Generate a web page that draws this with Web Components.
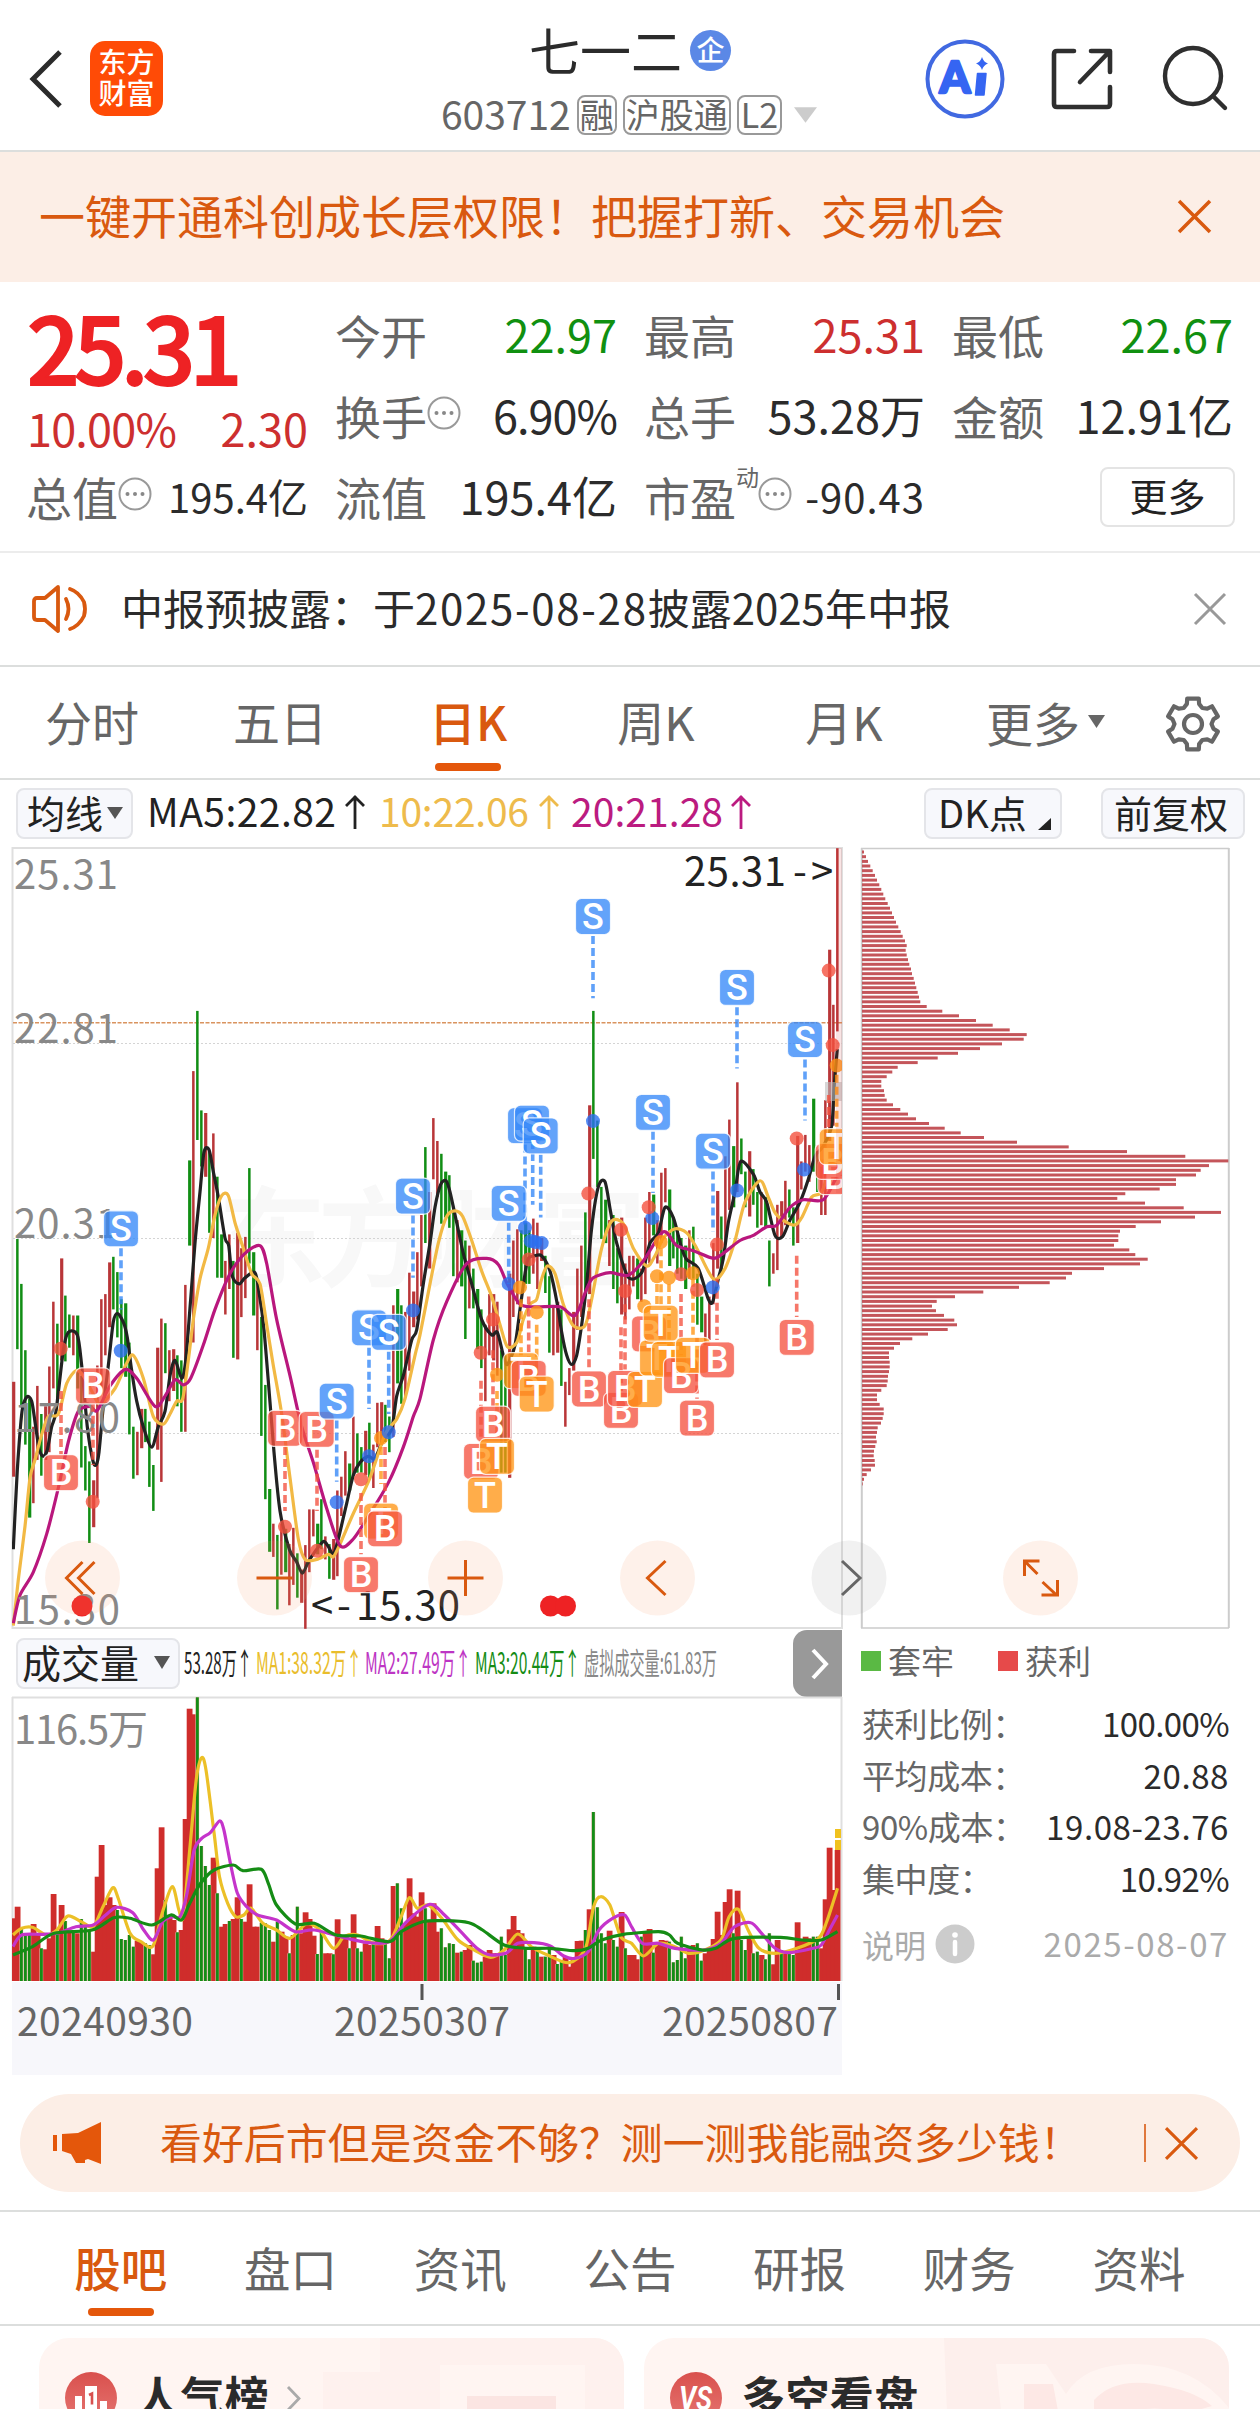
<!DOCTYPE html>
<html lang="zh-CN">
<head>
<meta charset="utf-8">
<title>七一二 603712</title>
<style>
  html, body { margin: 0; padding: 0; }
  body {
    width: 1260px;
    height: 2409px;
    overflow: hidden;
    background: #fff;
    color: #2b2b2b;
    font-family: "Noto Sans CJK SC", "Noto Sans", sans-serif;
    --orange: #d9590f;
    --tint: #fceee6;
    --up: #cd2f2f;
    --down: #109010;
    --grey: #666;
    --line: #dcdedd;
  }
</style>
</head>
<body>
<stock-app></stock-app>

<script>
// Small base class: every element sets its markup once, in its own shadow root.
class BaseEl extends HTMLElement {
  constructor() {
    super();
    this.attachShadow({ mode: 'open' });
  }
  connectedCallback() {
    this.shadowRoot.innerHTML = `<style>
      :host { display: block; box-sizing: border-box; }
      * { box-sizing: border-box; }
      svg { display: block; flex: none; overflow: visible; }
      ${this.css()}
    </style>${this.html()}`;
  }
  css() { return ''; }
  html() { return ''; }
}

const cross = (size, color, w = 3) => `
  <svg width="${size}" height="${size}" viewBox="0 0 32 32">
    <path d="M1 1 31 31M31 1 1 31" fill="none" stroke="${color}" stroke-width="${w}"/>
  </svg>`;

// Smooth path through a list of points.
function curve(pts) {
  let d = `M${pts[0][0].toFixed(1)} ${pts[0][1].toFixed(1)}`;
  for (let i = 0; i < pts.length - 1; i++) {
    const p0 = pts[i - 1] || pts[i], p1 = pts[i], p2 = pts[i + 1], p3 = pts[i + 2] || p2;
    const c = [
      p1[0] + (p2[0] - p0[0]) / 7, p1[1] + (p2[1] - p0[1]) / 7,
      p2[0] - (p3[0] - p1[0]) / 7, p2[1] - (p3[1] - p1[1]) / 7,
      p2[0], p2[1]
    ];
    d += 'C' + c.map(n => n.toFixed(1)).join(' ');
  }
  return d;
}

// "x,y x,y | x,y" : the part after the bar belongs to the second half of the plot.
function parse(text, fx, fy) {
  return text.split('|').flatMap((part, k) =>
    part.trim().split(/\s+/).map(p => {
      const [x, y] = p.split(',').map(Number);
      return [(x + k * 1260) / fx, y / fy];
    }));
}

customElements.define('app-header', class extends BaseEl {
  css() {
    return `
      :host { height: 152px; border-bottom: 2px solid var(--line); }
      header { display: grid; grid-template-columns: 380px 1fr 380px; height: 150px; }
      .left { display: flex; align-items: flex-start; padding: 41px 0 0 29px; gap: 27px; }
      .left > svg { margin-top: 9px; }
      .logo {
        width: 73px; height: 75px; border-radius: 15px; background: #ff4b06; color: #fff;
        font-size: 28px; line-height: 31px; font-weight: 500; text-align: center; padding-top: 5px;
      }
      .mid { display: flex; flex-direction: column; align-items: center; }
      .name { display: flex; align-items: center; height: 60px; margin-top: 19px; font-size: 51px; line-height: 60px; }
      .qi { width: 41px; height: 41px; border-radius: 50%; background: #5b88e6; color: #fff; font-size: 28px; line-height: 39px; text-align: center; font-weight: 500; margin: 3px 0 0 8px; }
      .code { display: flex; align-items: center; height: 40px; margin-top: 16px; font-size: 39px; color: #666; line-height: 40px; margin-right: 2px; }
      .code b { font-weight: 400; margin-top: -5px; }
      .tag { border: 2px solid #999; border-radius: 8px; height: 40px; line-height: 33px; font-size: 34px; padding: 0 1px; margin-left: 6px; }
      .right { display: flex; align-items: flex-start; padding: 39px 0 0 45px; }
    `;
  }
  html() {
    return `
    <header>
      <div class="left">
        <svg width="34" height="58" viewBox="0 0 34 58"><path d="M31 2 4 29 31 56" fill="none" stroke="#2b2b2b" stroke-width="5"/></svg>
        <div class="logo">东方<br>财富</div>
      </div>
      <div class="mid">
        <div class="name">七一二<div class="qi">企</div></div>
        <div class="code"><b>603712</b><span class="tag">融</span><span class="tag">沪股通</span><span class="tag" style="padding:0 2px">L2</span>
          <svg width="23" height="16" viewBox="0 0 24 16" style="margin-left:12px"><path d="M0 0h24L12 16z" fill="#ccc"/></svg>
        </div>
      </div>
      <div class="right">
        <svg width="80" height="80" viewBox="0 0 80 80">
          <circle cx="40" cy="40" r="37.500" fill="#fff" stroke="#4169e1" stroke-width="4"/>
          <text x="14.500" y="53.500" font-family="Lato, sans-serif" font-weight="900" font-size="44" fill="#3565f2" stroke="#3565f2" stroke-width="2.400" stroke-linejoin="round" textLength="30">A</text>
          <path d="M52.500 34.500h8.500l-2 21.500h-8.500z" fill="#3565f2" stroke="#3565f2" stroke-width="1.500" stroke-linejoin="round"/>
          <path d="M57 18q1.500 5 6 6.500-4.500 1.500-6 6.500-1.500-5-6-6.500 4.500-1.500 6-6.500z" fill="#3565f2"/>
        </svg>
        <svg width="64" height="64" viewBox="0 0 64 64" style="margin:8px 0 0 45px" fill="none" stroke="#2f2f2f" stroke-width="4.600" stroke-linecap="round" stroke-linejoin="round">
          <path d="M24 4H7q-3 0-3 3v50q0 3 3 3h50q3 0 3-3V40M41 4h19v21M59 5 30 35"/>
        </svg>
        <svg width="66" height="66" viewBox="0 0 66 66" style="margin:7px 0 0 49px" fill="none" stroke="#2f2f2f" stroke-width="4.400" stroke-linecap="round">
          <circle cx="30" cy="30" r="28"/><path d="M50 50 62 62"/>
        </svg>
      </div>
    </header>`;
  }
});

customElements.define('promo-bar', class extends BaseEl {
  css() {
    return `
      :host { height: 130px; background: var(--tint); color: var(--orange); }
      div { display: flex; align-items: center; justify-content: space-between; height: 128px; padding: 0 49px 0 39px; font-size: 46px; }
      span { margin-top: -4px; }
    `;
  }
  html() { return `<div><span><slot></slot></span>${cross(33, '#d9590f', 3.4)}</div>`; }
});

customElements.define('more-dots', class extends BaseEl {
  css() { return ':host { flex: none; }'; }
  html() {
    return `<svg width="34" height="34" viewBox="0 0 34 34"><circle cx="17" cy="17" r="15.500" fill="none" stroke="#999" stroke-width="2"/>
      <g fill="#888"><circle cx="9.500" cy="17" r="2"/><circle cx="17" cy="17" r="2"/><circle cx="24.500" cy="17" r="2"/></g></svg>`;
  }
});

customElements.define('quote-cell', class extends BaseEl {
  css() {
    return `
      :host { display: flex; align-items: center; font-size: 45px; line-height: 60px; height: 60px; white-space: nowrap; margin-top: -3px; }
      .k { color: var(--grey); font-size: 46px; margin-left: -1px; }
      .v { margin-left: auto; }
      .up { color: var(--up); } .down { color: var(--down); }
      .small { font-size: 40px; }
      .pct { letter-spacing: -1px; }
      .neg { letter-spacing: 1px; }
      sup { font-size: 23px; line-height: 23px; color: var(--grey); align-self: flex-start; margin-top: -1px; margin-right: -1px; }
      more-dots { margin-top: -5px; }
    `;
  }
  html() {
    const a = n => this.getAttribute(n) || '';
    return `<span class="k">${a('k')}</span>${a('sup') ? `<sup>${a('sup')}</sup>` : ''}
      ${this.hasAttribute('dots') ? '<more-dots></more-dots>' : ''}<span class="v ${a('tone')}">${a('v')}</span>`;
  }
});

customElements.define('quote-panel', class extends BaseEl {
  css() {
    return `
      :host { height: 271px; border-bottom: 2px solid #ececec; padding: 25px 27px 0 27px; }
      .grid { display: grid; grid-template-columns: 281px 281px 280px 280px; column-gap: 28px; grid-template-rows: 81px 81px 60px; }
      .price { grid-row: 1 / 3; }
      .big { font-size: 92px; font-weight: 500; -webkit-text-stroke: 2px #ee2224; line-height: 92px; color: #ee2224; letter-spacing: -5.500px; margin-top: -8px; height: 97px; }
      .chg { display: flex; justify-content: space-between; color: var(--up); font-size: 45px; line-height: 60px; margin-top: 2px; }
      .chg span:first-child { letter-spacing: -.8px; }
      button {
        justify-self: end; align-self: center; width: 135px; height: 60px; border: 2px solid #e4e4e4; border-radius: 8px; background: #fff;
        font: 38px/50px "Noto Sans CJK SC", sans-serif; color: #222; padding: 0 0 4px; margin-top: -4px; margin-right: -2px;
      }
    `;
  }
  html() {
    return `
    <div class="grid">
      <div class="price"><div class="big">25.31</div><div class="chg"><span>10.00%</span><span>2.30</span></div></div>
      <quote-cell k="今开" v="22.97" tone="down"></quote-cell>
      <quote-cell k="最高" v="25.31" tone="up"></quote-cell>
      <quote-cell k="最低" v="22.67" tone="down"></quote-cell>
      <quote-cell k="换手" v="6.90%" tone="pct" dots></quote-cell>
      <quote-cell k="总手" v="53.28万"></quote-cell>
      <quote-cell k="金额" v="12.91亿"></quote-cell>
      <quote-cell k="总值" v="195.4亿" tone="small" dots></quote-cell>
      <quote-cell k="流值" v="195.4亿"></quote-cell>
      <quote-cell k="市盈" sup="动" v="-90.43" tone="small neg" dots></quote-cell>
      <button>更多</button>
    </div>`;
  }
});

customElements.define('notice-bar', class extends BaseEl {
  css() {
    return `
      :host { height: 114px; border-bottom: 2px solid var(--line); }
      div { display: flex; align-items: center; height: 112px; padding: 0 34px 0 31px; font-size: 42px; }
      span { margin: -6px 0 0 34px; flex: 1; }
    `;
  }
  html() {
    return `<div>
      <svg width="56" height="50" viewBox="0 0 56 50" fill="none" stroke="#d9590f" stroke-width="3.800" stroke-linejoin="round">
        <path d="M27 3 14 14H6q-3 0-3 3v16q0 3 3 3h8l13 11z"/><path d="M35 15q5 10 0 20M39 5q9 3 14 13 2 7 0 14-5 10-14 13" stroke-linecap="round"/>
      </svg>
      <span><slot></slot></span>${cross(32, '#999')}</div>`;
  }
});

customElements.define('period-tabs', class extends BaseEl {
  css() {
    return `
      :host { height: 113px; border-bottom: 2px solid var(--line); }
      nav { display: grid; grid-template-columns: repeat(5, 188px) 211px 1fr; height: 110px; color: var(--grey); font-size: 47px; line-height: 108px; text-align: center; margin-left: -2px; }
      .on { color: var(--orange); font-weight: 500; display: flex; flex-direction: column; align-items: center; height: 110px; }
      .on::after { content: ""; width: 66px; height: 8px; border-radius: 4px; background: #e4570b; margin-top: -12px; flex: none; }
      .more { display: flex; align-items: center; justify-content: center; gap: 8px; padding-left: 4px; }
      .gear { display: flex; align-items: center; padding: 3px 0 0 16px; }
    `;
  }
  html() {
    const teeth = [];
    for (let i = 0; i < 6; i++) {
      // outline of a six-toothed gear, tooth by tooth
      const pt = (deg, r) => {
        const t = (deg + i * 60 - 90) * Math.PI / 180;
        return `${(28 + r * Math.cos(t)).toFixed(1)} ${(28 + r * Math.sin(t)).toFixed(1)}`;
      };
      teeth.push(pt(-13, 26), pt(13, 26), pt(17, 21), pt(30, 18.5), pt(43, 21));
    }
    return `<nav><span>分时</span><span>五日</span><span class="on">日K</span><span>周K</span><span>月K</span>
      <span class="more">更多<svg width="17" height="13" viewBox="0 0 17 13" style="margin-top:-2px"><path d="M0 0h17L8.500 13z" fill="#666"/></svg></span>
      <span class="gear"><svg width="56" height="56" viewBox="0 0 56 56" fill="none" stroke="#666" stroke-width="4.200" stroke-linejoin="round">
        <path d="M${teeth.join('L')}z"/><circle cx="28" cy="28" r="9"/></svg></span></nav>`;
  }
});

customElements.define('ma-bar', class extends BaseEl {
  css() {
    return `
      :host { height: 60px; padding: 7px 15px 0 16px; }
      div { display: flex; align-items: center; height: 52px; line-height: 48px; white-space: nowrap; }
      .box { border: 2px solid #e4e5e9; border-radius: 8px; background: #f7f8fc; height: 51px; display: flex; align-items: center; color: #222; font-size: 38px; line-height: 44px; padding-bottom: 3px; }
    `;
  }
  html() {
    const ma = (t, c, x, w) => `<text x="${x}" y="40" fill="${c}" textLength="${w}">${t}</text>`;
    const up = (x, c) => `<path d="M${x} 42V9M${x - 9} 19l9-9 9 9" fill="none" stroke="${c}" stroke-width="2.800"/>`;
    return `<div>
      <span class="box" style="width:117px;padding-left:9px">均线<svg width="16" height="12" viewBox="0 0 16 12" style="margin:3px 0 0 4px"><path d="M0 0h16L8 12z" fill="#555"/></svg></span>
      <svg width="640" height="52" viewBox="0 0 640 52" font-size="39">
        ${ma('MA5:22.82', '#222', 14, 189)}${up(222, '#222')}
        ${ma('10:22.06', '#eebb4c', 246, 150)}${up(416, '#eebb4c')}
        ${ma('20:21.28', '#bb1b80', 438, 152)}${up(608, '#bb1b80')}
      </svg>
      <span class="box" style="width:138px;margin-left:151px;padding-left:12px">DK点<svg width="13" height="12" viewBox="0 0 13 12" style="margin:24px 0 0 11px"><path d="M13 0v12H0z" fill="#222"/></svg></span>
      <span class="box" style="width:144px;margin-left:auto;padding-left:11px">前复权</span>
    </div>`;
  }
});

// One trading day per item: colour, top, bottom.
const CANDLES = `r1062,1248 g782,998 g870,1112 g1000,1185 g1095,1328 r1150,1300 r1070,1215 g1125,1246 r1110,1215 r1032,1200
r905,1075 g948,1100 r820,1020 g893,1022 g930,995 r932,1010 g932,1075 g1050,1230 g1188,1275 g1218,1378
r1255,1347 r1030,1290 r900,1075 r890,1010 r828,955 g817,920 g847,975 g900,1035 g908,1052 g985,1165
g1150,1252 r1160,1245 r1115,1192 g1115,1180 g1140,1268 g1225,1315 r995,1195 r938,1258 g947,1045 r1000,1100
r998,1080 g1010,1110 g1020,1160 r872,1160 g628,795 r453,985 g335,588 g530,640 r535,660 g610,770
r575,780 g660,858 g773,858 r825,930 r773,880 g825,1015 r770,1018 r800,935 r778,898 g643,830
g808,932 r860,1000 g935,1168 g1068,1292 g1272,1395 r1340,1405 g1362,1508 r1340,1440 g1350,1435 r1380,1500
r1348,1460 g1398,1485 r1430,1495 r1382,1546 r1312,1435 r1312,1365 g1340,1400 g1292,1390 r1365,1410 g1380,1448
r1370,1450 r1275,1443 r1248,1325 r1198,1285 g1222,1275 r1130,1245 g1163,1240 g1190,1240 r1158,1245 g1142,1250
r1185,1270 r1103,1190 r1102,1180 g1107,1180 g1130,1200 r912,1170 g880,1065 g912,1105 r925,1090 r848,1040
r885,955 r808,940 r735,875 g602,790 r690,840 r545,665 r590,700 g615,752 g650,740 g657,760
g720,855 r745,867 g765,875 g785,978 r795,918 g840,918 g880,998 g920,1035 r950,1100 r890,1010
r890,1020 r905,1050 g1000,1240 g1010,1240 r850,1250 r785,935 r763,910 g765,865 g750,870 g765,870
r742,850 r750,880 r780,825 g815,888 g855,1005 r915,1010 r905,1005 g920,1070 r1062,1150 r1035,1088
r925,1040 r840,960 r795,935 g730,885 r520,890 g335,625 g550,680 g680,782 g705,790 r745,835
g735,880 g800,908 r740,930 r830,940 r815,920 r815,875 g820,900 r840,905 r740,890 r690,830
g695,775 r745,830 r652,790 r643,710 g685,835 g740,820 g765,850 g780,860 g795,880 r765,860
g758,860 g850,950 g895,965 r928,990 r895,980 r790,910 r688,840 g738,850 r620,790 r548,725
g600,720 r475,690 g585,655 g650,720 r610,738 g645,715 g690,760 r690,755 g700,760 g785,875
r810,850 r715,843 r708,780 r668,755 g685,740 g720,795 r580,790 r630,685 r578,650 r598,670
g507,650 g610,690 r640,735 r510,735 r215,590 r323,560 r16,375`;

const MA5 = `40,1390 52,1235 66,1120 80,1092 95,1100 107,1150 118,1195 130,1208 142,1195 155,1150 168,1120 190,1000 205,965 232,970 245,1030 262,1150 278,1215 288,1225 297,1200 310,1110 325,1030 340,945 352,928 370,945 382,975 395,1040 410,1100 430,1150 455,1190 475,1150 495,1120 510,1050 525,1020 545,1055 557,1020 572,900 585,790 600,690 612,612 627,607 640,650 655,700 675,780 686,795 697,855 718,870 735,858 765,848 778,890 792,960 808,1085 822,1200 840,1315 868,1390 890,1415 907,1437 925,1415 945,1395 970,1375 985,1385 1000,1400 1015,1370 1040,1300 1060,1245 1080,1220 1105,1208 1125,1212 1150,1175 1175,1155 1190,1090 1210,1050 1235,980 1250,960 1270,870
| 30,790 45,720 62,675 78,668 90,690 110,750 130,810 155,870 185,940 215,970 232,965 250,1010 262,1028 285,990 300,920 315,850 325,820 345,815 365,815 390,845 412,910 425,965 440,1010 455,1028 470,1010 485,950 500,870 515,760 535,680 555,670 572,730 590,790 625,857 665,848 690,790 715,770 735,720 760,740 785,800 800,822 835,840 865,900 878,905 895,860 910,820 925,750 945,690 962,630 1000,655 1020,690 1040,710 1065,775 1088,777 1110,745 1140,710 1165,665 1185,620 1210,600 1235,560 1243,480 1252,410`;
const MA10 = `40,1540 55,1450 75,1345 90,1250 105,1215 125,1165 145,1130 175,1125 200,1065 228,1040 250,1050 275,1080 300,1105 345,1075 380,1025 400,1010 430,1055 460,1130 490,1145 510,1125 530,1100 548,1095 565,1020 580,940 600,860 625,800 645,735 665,697 685,697 705,750 730,800 755,850 780,870 800,950 820,1030 845,1125 870,1250 895,1370 915,1410 950,1410 985,1400 1000,1405 1020,1380 1060,1320 1110,1250 1155,1165 1190,1135 1215,1095 1245,1010
| 0,970 30,870 55,790 80,738 105,727 128,738 155,785 185,845 215,895 240,950 262,993 290,985 310,940 330,910 350,900 365,860 382,835 405,850 430,910 460,952 495,952 515,900 545,800 575,747 610,752 640,800 680,835 705,815 730,780 765,762 800,770 830,800 880,860 915,840 945,785 975,710 1020,668 1045,700 1070,735 1120,755 1145,740 1175,700 1205,690 1230,640 1250,600`;
const MA20 = `40,1535 60,1480 100,1435 140,1360 175,1270 205,1180 235,1120 270,1110 292,1118 330,1070 375,1038 410,1055 465,1110 495,1090 525,1058 550,1068 572,1055 610,990 645,920 690,850 735,810 780,795 800,830 830,940 870,1050 905,1150 940,1220 980,1310 1020,1383 1060,1370 1110,1320 1165,1260 1210,1190 1240,1130
| 0,1095 40,980 80,905 140,830 200,820 235,832 262,870 300,910 345,915 420,915 465,932 500,880 520,858 570,848 625,853 670,825 730,768 770,795 820,805 880,820 910,810 960,785 1000,775 1040,758 1070,755 1110,720 1150,705 1210,705 1250,660`;

const TONE = { S: '#3487f8', B: '#f4513f', T: '#ff9413' };
// Dotted stems: type, x, from, to
const STEMS = `S363,800,920 B183,1080,1205 B279,1105,1225 B855,1190,1315 B951,1195,1315 S1010,1138,1258 S1107,995,1115 S1166,1003,1125 S1239,736,858 T1143,1190,1262 B1155,1190,1312 B1083,1280,1400
S1526,750,870 S1575,597,760 S1598,590,715 S1622,617,740 S1779,188,310 S1959,572,692 S2139,650,768 S2211,328,448 S2415,430,550 B1443,1060,1180 B1479,1000,1110 T1491,1080,1170 B1586,895,1015 T1563,900,1010 T1610,950,1050 B1767,900,1038 B1863,955,1080 B1875,910,1038 T1971,870,910 T1983,800,910 T2007,870,1000 B2043,890,1010 T2079,860,970 B2091,975,1095 B2151,860,980 B2390,815,935 B2486,500,565 T2510,460,562`;
const DOTS = `S362,1001 B182,997 B278,1297 B855,1346 B951,1393 S1010,1298 S1107,1208 T1143,1172 S1166,1161 S1239,922 B1083,1253
S1526,870 S1575,760 S1592,786 S1606,788 S1625,790 S1779,551 S1957,741 S2138,877 S2211,687 S2412,646
B1442,1005 B1479,940 B1586,822 B1765,693 B1863,764 B1875,884 B1946,720 B2043,851 B2091,882 B2151,793 B2390,585 B2486,256 B2498,402
T1491,1048 T1560,877 T1610,926 T1933,914 T1971,855 T2007,858 T1982,788 T2079,849 T2510,442`;
const FLAGS = `S363,762 B183,1240 B279,1070 B855,1153 B950,1155 S1010,1100 S1107,956 S1166,965 S1239,698 T1143,1335 B1155,1350 B1083,1440
S1526,712 S1575,560 S1596,555 S1622,580 S1779,150 S1959,534 S2139,610 S2211,289 S2415,391
B1479,1145 B1443,1218 T1455,1284 T1491,1208 T1563,1040 B1586,1055 T1610,1086 B1767,1076 B1863,1118 B1875,1075 T1935,1077
B1947,968 T1971,1015 T1982,947 T2007,1018 B2043,1050 T2079,1010 B2091,1133 B2151,1019 B2390,975 B2506,660 B2498,630 T2510,601`;
const items = text => text.trim().split(/\s+/).map(s => [s[0], ...s.slice(1).split(',').map(Number)]);

customElements.define('k-chart', class extends BaseEl {
  css() { return ':host { width: 850px; height: 790px; }'; }
  html() {
    const X = v => +(v / 3).toFixed(1), Y = v => +(v / 1.96).toFixed(1);
    const bars = items(CANDLES).map(([c, t, b], i) =>
      `<rect x="${(12.1 + i * 4).toFixed(1)}" y="${Y(t)}" width="${i % 4 === 0 ? 3.2 : 2.5}" height="${Y(b - t)}" fill="${c === 'r' ? '#b93638' : '#118e14'}"/>`).join('');
    const line = (d, c) => `<path d="${curve(parse(d, 3, 1.96))}" fill="none" stroke="${c}" stroke-width="3.200"/>`;
    const stems = items(STEMS).map(([k, x, a, b]) =>
      `<path d="M${X(x)} ${Y(a)}V${Y(b)}" stroke="${TONE[k]}" stroke-width="3.600" stroke-dasharray="8 4" opacity=".78"/>`).join('');
    const dots = items(DOTS).map(([k, x, y]) =>
      `<circle cx="${X(x)}" cy="${Y(y)}" r="7" fill="${k === 'S' ? '#2b6ff0' : TONE[k]}" opacity=".8"/>`).join('');
    const flags = items(FLAGS).map(([k, x, y]) => `
      <g transform="translate(${X(x)} ${Y(y)})"><rect x="-17.500" y="-18" width="35" height="36" rx="6" fill="${TONE[k]}" fill-opacity=".77" stroke="#fff" stroke-width="1.200" stroke-opacity=".8"/>
      <text y="12.500" text-anchor="middle" font-family="Roboto, sans-serif" font-weight="500" font-size="36" fill="#fff">${k}</text></g>`).join('');
    const axis = [['25.31', 95], ['22.81', 397], ['20.31', 780], ['17.80', 1160], ['15.30', 1537]]
      .map(([t, y]) => `<text x="14" y="${Y(y)}" textLength="${t[4] === '0' ? 106 : 104}">${t}</text>`).join('');
    return `
    <svg width="850" height="790" viewBox="0 0 850 790">
      <defs><clipPath id="plot"><rect x="12" y="0" width="830" height="790"/></clipPath></defs>
      <g font-size="108" font-weight="700" fill="#f8f8f8"><text x="218" y="438">东</text><text x="318" y="438">方</text><text x="424" y="438">财</text><text x="538" y="438">富</text></g>
      <path d="M12.500 8V788H842V8z" fill="none" stroke="#dfdfdf" stroke-width="2"/>
      <g stroke="#d4d4d4" stroke-dasharray="2 2"><path d="M13 203.500H842M13 398.500H842M13 593.500H842"/></g>
      <path d="M13 182.700H842" stroke="#d9935f" stroke-width="1.600" stroke-dasharray="4 1.500"/>
      <g clip-path="url(#plot)">
        ${bars}${line(MA5, '#222')}${line(MA10, '#f2b944')}${line(MA20, '#b9177d')}
        <g font-size="40" fill="#888">${axis}</g>
        <g font-size="40" fill="#222">
          <text y="46"><tspan x="684" textLength="102">25.31</tspan><tspan x="793">-</tspan><tspan x="811">&gt;</tspan></text>
          <text y="780"><tspan x="311">&lt;</tspan><tspan x="337">-</tspan><tspan x="356" textLength="104">15.30</tspan></text>
        </g>
        <rect x="825" y="242" width="17" height="19" fill="#bbb" opacity=".6"/>
        ${stems}${dots}${flags}
        <rect x="836" y="8" width="6" height="345" fill="#cd2f2f" opacity=".13"/>
        <g fill="#ee2224"><circle cx="82" cy="766" r="10.500"/><circle cx="550.500" cy="766" r="10.500"/><circle cx="565.500" cy="766" r="10.500"/></g>
      </g>
    </svg>`;
  }
});

customElements.define('volume-head', class extends BaseEl {
  css() {
    return `
      :host { height: 67px; width: 842px; }
      div { display: flex; align-items: center; height: 67px; padding-left: 16px; }
      .box { width: 164px; height: 51px; border: 2px solid #e4e5e9; border-radius: 8px; background: #f7f8fc; display: flex; align-items: center; font-size: 39px; line-height: 44px; color: #222; padding: 0 0 4px 4px; margin-top: -1px; }
      .next { width: 49px; height: 67px; border-radius: 14px 0 0 14px; background: #999; margin-left: auto; display: flex; align-items: center; justify-content: center; }
    `;
  }
  html() {
    const t = (s, c, x, w) => `<text x="${x}" y="43.500" fill="${c}" textLength="${w}" lengthAdjust="spacingAndGlyphs">${s}</text>`;
    return `<div>
      <span class="box">成交量<svg width="16" height="13" viewBox="0 0 16 13" style="margin:3px 0 0 15px"><path d="M0 0h16L8 13z" fill="#555"/></svg></span>
      <svg width="560" height="67" viewBox="0 0 560 67" font-size="30">
        ${t('53.28万↑', '#222', 4, 68)}${t('MA1:38.32万↑', '#e9bd2c', 76, 106)}${t('MA2:27.49万↑', '#bd35c4', 185, 106)}${t('MA3:20.44万↑', '#158c15', 295, 105)}${t('虚拟成交量:61.83万', '#888', 404, 133)}
      </svg>
      <span class="next"><svg width="18" height="30" viewBox="0 0 18 30" style="margin-left:4px"><path d="M2 1 15 15 2 29" fill="none" stroke="#fff" stroke-width="4"/></svg></span>
    </div>`;
  }
});

const VOLUMES = `r895 r860 g925 g940 g945 r912 r940 g985 r988 r955 r822 g940 r855 g903 r935 g930 r940 g897 g910 g930
r995 r770 r675 r855 r832 r855 g870 g957 g960 g945 g980 r962 r968 g970 g975 r1003 r745 r622 g840 r890
r900 g937 r930 r597 r266 r283 g232 g678 g738 g795 r713 g820 r920 r912 g903 r897 r832 g897 r905 r793
r920 r920 g908 g910 g930 r965 g905 r935 r950 g1000 r945 g860 r940 r877 r897 r947 g1002 g935 r1000 r1000
g1003 r898 r960 r945 g985 r883 g985 g995 r970 r975 g965 r918 r955 g970 g1015 r798 g790 g865 r910 r775
r880 r890 r817 g865 r905 r850 r935 g925 g982 g970 g972 r998 g995 r990 r975 g1022 g1028 g1025 r1010 r990
r1000 r1000 g950 g1005 r928 r888 r930 r940 g985 g1018 r980 g985 r1010 g1010 g985 r1005 g1032 g1020 r1010 r1040
r1020 r963 r962 g930 r868 g576 g862 g940 g970 r932 g960 g980 r876 g985 r1005 r1005 r1018 g950 r935 r927
g998 r970 r960 r962 g965 g1027 g1020 g950 g1015 r985 r975 g970 g1022 r1000 r990 r957 r875 r945 r846 r808
g940 r812 g960 g990 r955 g1000 g995 r1005 g1018 g940 r1033 r960 g990 r1000 g1000 g1005 r907 r960 r950 r955
g950 g950 r985 r838 r683 r810 r690`;
const VMA1 = `24,945 40,925 60,922 85,945 105,930 125,888 150,905 172,920 190,860 208,803 218,835 240,940 260,965 282,978 300,875 318,800 330,870 338,890 350,690 362,480 372,413 380,450 395,640 405,770 420,850 435,890 450,885 463,865 485,910 510,930 535,955 565,912 590,930 615,985 635,950 660,945 690,970 720,960 740,890 755,833 770,865 790,855 815,895 845,960 875,990 905,1012 930,990 955,942 980,980 1010,1005 1050,1028 1080,985 1095,860 1108,830 1125,855 1145,950 1165,970 1187,1008 1215,970 1245,980 1270,1000 1300,990 1330,960 1345,890 1362,868 1380,930 1400,985 1430,1000 1470,985 1510,955 1525,905 1545,805`;
const VMA2 = `24,980 40,945 80,943 110,938 140,920 172,915 195,885 215,862 245,878 265,930 283,960 300,905 318,890 332,890 345,820 358,690 372,655 388,638 405,603 413,630 425,730 438,820 455,860 475,885 510,900 545,935 580,930 640,955 680,968 718,965 750,905 793,853 820,885 850,935 880,985 905,1005 935,998 955,970 985,968 1015,978 1040,1008 1060,1015 1085,995 1105,930 1130,895 1152,885 1165,920 1185,970 1215,970 1245,985 1300,990 1330,970 1355,920 1385,908 1405,940 1430,985 1455,998 1500,985 1515,975 1530,930 1545,885`;
const VMA3 = `24,1005 60,980 100,940 170,930 210,893 240,895 280,915 315,885 335,900 350,850 370,790 395,750 430,735 448,752 482,748 495,790 510,855 545,912 580,910 620,945 665,948 718,965 740,935 780,905 820,902 865,908 890,930 930,975 970,985 1015,985 1060,992 1085,985 1110,960 1150,943 1215,935 1235,945 1250,970 1295,990 1320,985 1355,955 1440,952 1480,960 1515,960 1545,935`;

customElements.define('volume-chart', class extends BaseEl {
  css() { return ':host { width: 850px; height: 378px; }'; }
  html() {
    const Y = v => +(v / 3).toFixed(1);
    const all = items(VOLUMES).map(([c, y], i) => [c, y, 13.3 + i * 4]);
    const reds = all.filter(b => b[0] === 'r').map(([, y, x]) => `<rect x="${(x - 2.6).toFixed(1)}" y="${Y(y)}" width="5.800" height="${Y(1083 - y)}"/>`).join('');
    const greens = all.filter(b => b[0] === 'g').map(([, y, x]) => `<rect x="${(x - 1.4).toFixed(1)}" y="${Y(y)}" width="2.900" height="${Y(1083 - y)}"/>`).join('');
    const gaps = all.filter(b => b[0] === 'g').map(([, y, x]) => `<rect x="${(x - 1.9).toFixed(1)}" y="${Y(y)}" width="3.800" height="${Y(1083 - y)}"/>`).join('');
    const line = (d, c) => `<path d="${curve(parse(d, 1.8447, 3))}" fill="none" stroke="${c}" stroke-width="3.200"/>`;
    return `
    <svg width="850" height="378" viewBox="0 77 850 378">
      <defs><clipPath id="vol"><rect x="12" y="77" width="830" height="285"/></clipPath></defs>
      <rect x="12" y="362" width="830" height="93" fill="#f7f7fb"/>
      <path d="M12.500 77V361M12 77.500H842M841.500 77V361" stroke="#dfdfdf" stroke-width="2"/>
      <g clip-path="url(#vol)">
        <g fill="#cf2d2b">${reds}</g><g fill="#eeb7b0">${gaps}</g><g fill="#158c15">${greens}</g>
        <path d="M835 209h6v9h-6zM835 220h6v10h-6z" fill="#f0c21f"/>
        ${line(VMA1, '#ecc027')}${line(VMA2, '#c534cb')}${line(VMA3, '#158c15')}
      </g>
      <path d="M422 364v16M838.500 364v16" stroke="#555" stroke-width="3"/>
      <g font-size="40" fill="#888"><text x="14" y="124" textLength="134">116.5万</text></g>
      <g font-size="39" fill="#666"><text x="17" y="416" textLength="176">20240930</text><text x="334" y="416" textLength="176">20250307</text><text x="662" y="416" textLength="176">20250807</text></g>
    </svg>`;
  }
});

// Right end of every cost-distribution row, 66 being the axis.
const CHIPS = [72,78,84,91,98,105,111,118,124,130,136,143,150,156,162,168,175,182,188,195,200,197,200,204,208,213,216,221,225,229,233,237,241,260,307,357,408,458,509,560,551,486,420,354,293,233,173,157,140,124,124,132,134,140,159,181,204,228,267,314,362,432,531,686,861,1036,1165,1107,1082,1068,1008,1008,959,856,832,915,1031,1143,1065,963,887,840,835,835,822,868,886,923,900,792,696,678,629,537,430,345,290,276,288,312,343,351,323,264,217,180,162,147,147,149,149,147,144,143,140,124,111,111,119,131,131,128,123,113,111,108,110,106,102,101,104,105,93,80,72,68];

customElements.define('chip-panel', class extends BaseEl {
  css() {
    return `
      :host { width: 410px; padding-left: 11px; font-size: 33px; color: var(--grey); }
      .legend { display: flex; align-items: center; height: 64px; line-height: 40px; padding: 0 0 4px; }
      i { width: 20px; height: 20px; margin: 2px 7px 0 0; }
      dl { display: grid; grid-template-columns: auto auto; justify-content: space-between; width: 368px; margin: 4px 0 0; line-height: 51.600px; padding-left: 1px; }
      dt { letter-spacing: -.4px; }
      dd { margin: 0; text-align: right; color: #2b2b2b; letter-spacing: .6px; }
      .pct { letter-spacing: -.6px; }
      .note { display: flex; align-items: center; justify-content: space-between; width: 368px; color: #aaa; height: 50px; margin-top: 15px; padding-left: 1px; }
      .note span { display: flex; align-items: center; gap: 9px; font-size: 32px; line-height: 46px; }
      .note time { letter-spacing: 1.600px; margin-top: -3px; }
    `;
  }
  html() {
    const rows = CHIPS.map((v, i) => `<rect x="1" y="${(10.5 + i * 4.681).toFixed(1)}" width="${((v - 66) / 3).toFixed(1)}" height="3"/>`).join('');
    return `
      <svg width="369" height="790" viewBox="0 0 369 790">
        <path d="M0 8.500H368M0 788H368" stroke="#ccc" stroke-width="1.500"/><path d="M.800 8V788M367.800 8V788" stroke="#ccc" stroke-width="2"/>
        <g fill="#c4555a">${rows}</g>
      </svg>
      <div class="legend"><i style="background:#5ab944"></i>套牢<i style="background:#e64a4a;margin-left:44px"></i>获利</div>
      <dl><dt>获利比例：</dt><dd class="pct">100.00%</dd><dt>平均成本：</dt><dd>20.88</dd><dt>90%成本：</dt><dd>19.08-23.76</dd><dt>集中度：</dt><dd class="pct">10.92%</dd></dl>
      <div class="note"><span>说明<svg width="40" height="40" viewBox="0 0 40 40"><circle cx="20" cy="20" r="19.500" fill="#ccc"/><circle cx="20" cy="11" r="2.800" fill="#fff"/><path d="M20 18v12" stroke="#fff" stroke-width="4.500" stroke-linecap="round"/></svg></span><time>2025-08-07</time></div>`;
  }
});

// Round pan / zoom buttons that float over both charts.
customElements.define('chart-controls', class extends BaseEl {
  css() { return ':host { position: absolute; left: 0; top: 690px; pointer-events: none; }'; }
  html() {
    const btn = (x, d, grey) => `<g transform="translate(${x} 48)"><circle r="37.500" fill="${grey ? '#999' : '#f79b6c'}" fill-opacity=".14"/>
      <path d="${d}" fill="none" stroke="${grey ? '#666' : '#d9590f'}" stroke-width="3"/></g>`;
    return `<svg width="1260" height="100" viewBox="0 0 1260 100">
      ${btn(82.5, 'M0 -16-16 0 0 16M12 -16-4 0 12 16')}${btn(274.5, 'M-18 0H18')}${btn(465.5, 'M-18 0H18M0 -18V18')}
      ${btn(657.5, 'M8 -17-10 0 8 17')}${btn(849, 'M-7 -17 11 0-7 17', true)}
      ${btn(1040.5, 'M-16 -2V-17H-1M-16 -17-3 -4M2 4 16 17M1 17H17V2')}
    </svg>`;
  }
});

customElements.define('chart-area', class extends BaseEl {
  css() {
    return `
      :host { position: relative; height: 1235px; }
      .cols { display: grid; grid-template-columns: 850px 410px; }
    `;
  }
  html() {
    return `<div class="cols"><div><k-chart></k-chart><volume-head></volume-head><volume-chart></volume-chart></div><chip-panel></chip-panel></div><chart-controls></chart-controls>`;
  }
});

customElements.define('loan-bar', class extends BaseEl {
  css() {
    return `
      :host { padding: 19px 20px 19px; height: 137px; border-bottom: 2px solid var(--line); }
      div { display: flex; align-items: center; height: 98px; border-radius: 49px; background: var(--tint); color: var(--orange); font-size: 41.900px; padding: 0 42px 0 32px; }
      p { margin: -5px 0 0 58px; flex: 1; white-space: nowrap; }
      b { width: 2px; height: 38px; background: #e0783d; margin-right: 19px; }
    `;
  }
  html() {
    return `<div>
      <svg width="50" height="44" viewBox="0 0 50 44" fill="#e4570b"><path d="M1 14h4v16H1z"/><path d="M10 13 26 12 49 1v42L36 38l-3 1v3h-9l-5-9-9-3z"/></svg>
      <p><slot></slot></p><b></b>${cross(33, '#d9590f')}</div>`;
  }
});

customElements.define('info-tabs', class extends BaseEl {
  css() {
    return `
      :host { height: 114px; border-bottom: 2px solid var(--line); }
      nav { display: grid; grid-template-columns: repeat(7, 169.700px); padding-left: 36px; height: 112px; text-align: center; font-size: 46.500px; line-height: 109px; color: var(--grey); }
      .on { color: var(--orange); font-weight: 500; display: flex; flex-direction: column; align-items: center; }
      .on::after { content: ""; width: 66px; height: 8px; border-radius: 4px; background: #e4570b; margin-top: -13px; flex: none; }
    `;
  }
  html() {
    return `<nav><span class="on">股吧</span>${['盘口', '资讯', '公告', '研报', '财务', '资料'].map(t => `<span>${t}</span>`).join('')}</nav>`;
  }
});

customElements.define('rank-card', class extends BaseEl {
  css() {
    return `
      :host { height: 150px; border-radius: 30px; background: #fff5f2; overflow: hidden; position: relative; }
      .row { position: relative; display: flex; align-items: center; padding: 32px 0 0 26px; height: 86px; }
      h3 { margin: -4px 0 0 19px; font-size: 44px; line-height: 54px; color: #2b2b2b; letter-spacing: .4px; }
      .deco { position: absolute; right: 0; top: 0; }
    `;
  }
  html() {
    const vs = this.getAttribute('icon') === 'vs';
    const mark = vs
      ? '<text x="25.500" y="39" text-anchor="middle" font-family="Roboto, sans-serif" font-style="italic" font-weight="700" font-size="34" textLength="33" lengthAdjust="spacingAndGlyphs" fill="#fff">VS</text>'
      : '<path d="M10 25h7v22h-7zM20 15h12v34H20zM35 30h7v14h-7z" fill="#fff"/><path d="M24 24l3-1.500v11" fill="none" stroke="#d8504e" stroke-width="2.600"/>';
    const deco = vs
      ? '<path d="M0 0h285v100H4z" fill="#fdefec"/><path d="M52 26H102L122 56Q140 26 190 26q60 0 95 44v30H60z" fill="#fff5f2"/><path d="M80 46h29l10 54H80zM150 62q20-22 60-16 40 6 58 22l-28 8q-40-14-70 8l-20 16z" fill="#fde8e5"/>'
      : '<path d="M41 0H285V100H-16V34H41z" fill="#fef1ee"/><path d="M101 27H246V100H101z" fill="#fff5f2"/><path d="M128 58h89v42h-89z" fill="#fbe5e2"/>';
    return `<svg class="deco" width="285" height="150" viewBox="0 0 285 150">${deco}</svg>
      <div class="row"><svg width="52" height="52" viewBox="0 0 52 52"><defs><linearGradient id="g" x2="0" y2="1"><stop stop-color="#d9504d"/><stop offset="1" stop-color="#e57672"/></linearGradient></defs><circle cx="26" cy="27" r="26" fill="url(#g)"/>${mark}</svg>
      <h3><slot></slot></h3>${vs ? '' : '<svg width="15" height="25" viewBox="0 0 15 25" style="margin:2px 0 0 17px"><path d="M2 1 13 12.500 2 24" fill="none" stroke="#aaa" stroke-width="2.800"/></svg>'}</div>`;
  }
});

customElements.define('stock-app', class extends BaseEl {
  css() {
    return `
      :host { width: 1260px; height: 2409px; overflow: hidden; }
      .cards { display: grid; grid-template-columns: 585px 585px; gap: 20px; padding: 12px 0 0 39px; }
      .date { letter-spacing: 1.700px; }
    `;
  }
  html() {
    return `
      <app-header></app-header>
      <promo-bar>一键开通科创成长层权限！把握打新、交易机会</promo-bar>
      <quote-panel></quote-panel>
      <notice-bar>中报预披露：于<span class="date">2025-08-28</span>披露2025年中报</notice-bar>
      <period-tabs></period-tabs>
      <ma-bar></ma-bar>
      <chart-area></chart-area>
      <loan-bar>看好后市但是资金不够？测一测我能融资多少钱！</loan-bar>
      <info-tabs></info-tabs>
      <div class="cards"><rank-card icon="bars">人气榜</rank-card><rank-card icon="vs">多空看盘</rank-card></div>`;
  }
});
</script>
</body>
</html>
